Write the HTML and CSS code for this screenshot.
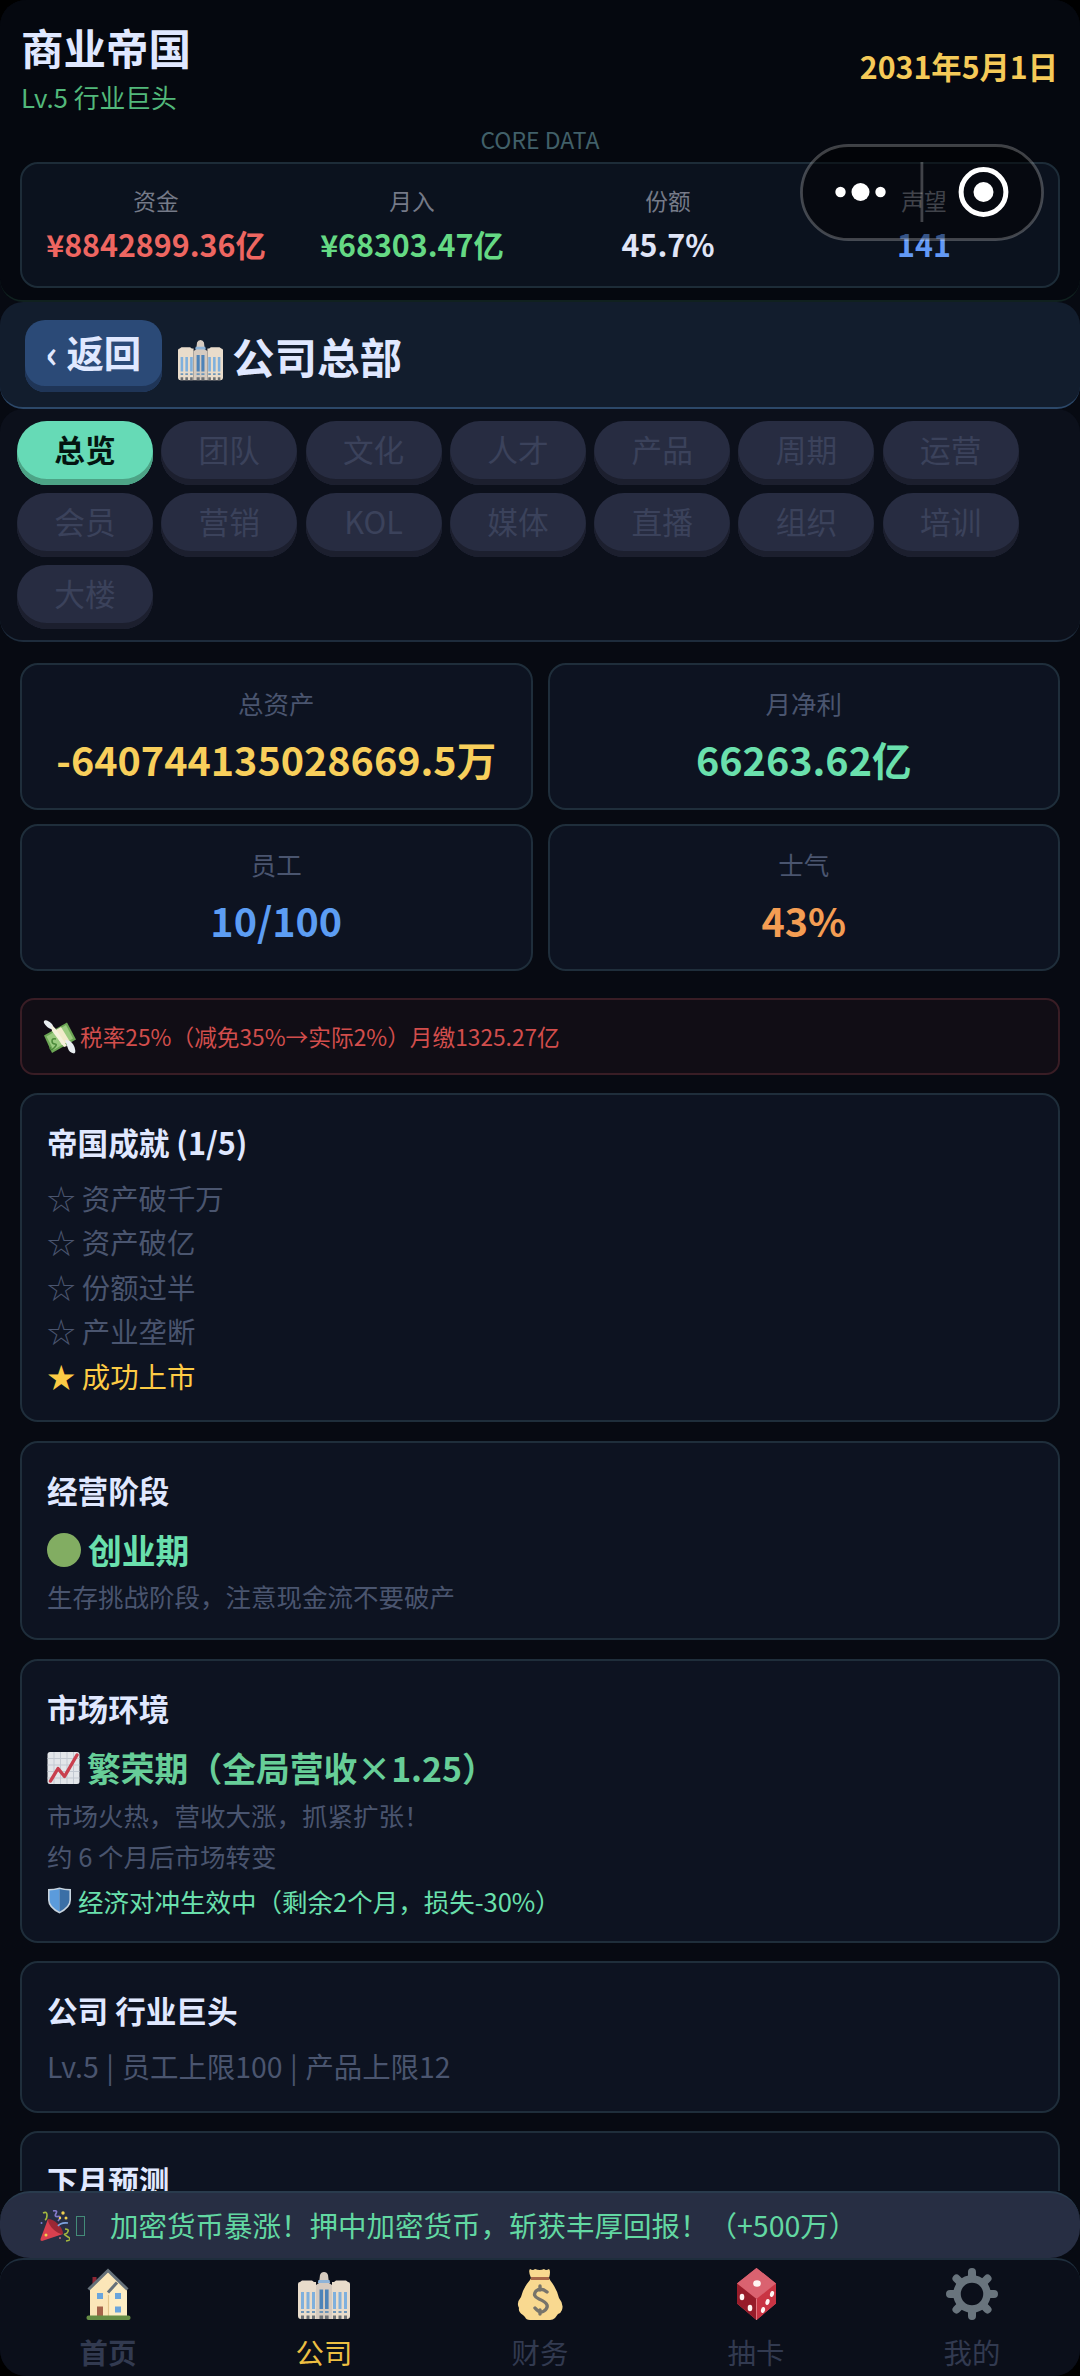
FILE: index.html
```html
<!DOCTYPE html>
<html lang="zh-CN">
<head>
<meta charset="utf-8">
<title>商业帝国</title>
<link rel="stylesheet" href="styles.css">
</head>
<body>
<svg class="defs" width="0" height="0" aria-hidden="true">
  <symbol id="building" viewBox="0 0 52 48">
    <path d="M0 12q0-2 2-2l2-1.500h10l2 1.500h2V47H3q-3 0-3-3zM52 12q0-2-2-2l-2-1.500H38l-2 1.500h-2V47h15q3 0 3-3z" fill="#e9dccb"/>
    <path d="M18 13l3-2 1-8q1-3 4-3t4 3l1 8 3 2v34H18z" fill="#d6cbc0"/>
    <path d="M20.500 8h11l.7 3h-12.400z" fill="#8fb4d8"/>
    <path d="M3 20h3v17H3zM8.500 20h3v17h-3zM14 20h3v17h-3zM35 20h3v17h-3zM40.500 20h3v17h-3zM46 20h3v17h-3z" fill="#7fb0dd"/>
    <path d="M21.500 17.500h3.600V37h-3.600zM27 17.500h3.600V37H27z" fill="#4d83b8"/>
    <path d="M3 39h3v2H3zM8.500 39h3v2h-3zM14 39h3v2h-3zM35 39h3v2h-3zM40.500 39h3v2h-3zM46 39h3v2h-3zM21.500 39h3.600v2h-3.600zM27 39h3.600v2H27z" fill="#6d95b8"/>
    <path d="M3 43.500h3V47H3zM8.500 43.500h3V47h-3zM14 43.500h3V47h-3zM35 43.500h3V47h-3zM40.500 43.500h3V47h-3zM46 43.500h3V47h-3zM21.500 43.500h3.600V47h-3.600zM27 43.500h3.600V47H27z" fill="#6b7075"/>
  </symbol>
</svg>
<div class="app">
  <header class="top">
    <div class="brand-row">
      <div>
        <div class="brand">商业帝国</div>
        <div class="level">Lv.5 行业巨头</div>
      </div>
      <div class="date">2031年5月1日</div>
    </div>
    <div class="core-label">CORE DATA</div>
    <div class="core">
      <div class="core-item"><span>资金</span><b class="red">¥8842899.36亿</b></div>
      <div class="core-item"><span>月入</span><b class="green">¥68303.47亿</b></div>
      <div class="core-item"><span>份额</span><b class="white">45.7%</b></div>
      <div class="core-item"><span>声望</span><b class="blue">141</b></div>
    </div>
    <svg class="capsule" width="244" height="97" viewBox="0 0 244 97">
      <rect x="1.500" y="1.500" width="241" height="94" rx="47" fill="#000" fill-opacity=".45" stroke="#fff" stroke-opacity=".24" stroke-width="2.800"/>
      <circle cx="40.500" cy="48" r="5.200" fill="#fff"/><circle cx="60.500" cy="48" r="9" fill="#fff"/><circle cx="80.500" cy="48" r="5.200" fill="#fff"/>
      <rect x="120.500" y="18" width="2.800" height="60" fill="#fff" fill-opacity=".24"/>
      <circle cx="183.500" cy="48" r="22.400" fill="none" stroke="#fff" stroke-width="5"/><circle cx="183.500" cy="48" r="10" fill="#fff"/>
    </svg>
  </header>

  <div class="titlebar">
    <button class="back">‹ 返回</button>
    <svg class="title-icon" width="45" height="41" viewBox="0 0 52 48" preserveAspectRatio="none"><use href="#building"/></svg>
    <h1>公司总部</h1>
  </div>

  <nav class="tabs">
    <button class="tab active">总览</button><button class="tab">团队</button><button class="tab">文化</button><button class="tab">人才</button><button class="tab">产品</button><button class="tab">周期</button><button class="tab">运营</button>
    <button class="tab">会员</button><button class="tab">营销</button><button class="tab">KOL</button><button class="tab">媒体</button><button class="tab">直播</button><button class="tab">组织</button><button class="tab">培训</button>
    <button class="tab">大楼</button>
  </nav>

  <main class="content">
    <section class="stats">
      <div class="stat"><span>总资产</span><b class="gold">-640744135028669.5万</b></div>
      <div class="stat"><span>月净利</span><b class="mint">66263.62亿</b></div>
      <div class="stat"><span>员工</span><b class="sky">10/100</b></div>
      <div class="stat"><span>士气</span><b class="orange">43%</b></div>
    </section>

    <div class="tax">
      <svg width="34" height="34" viewBox="0 0 34 34">
        <path d="M1 15.500L24 2.500l9 17L9 33z" fill="#6ca655"/>
        <path d="M3.500 16.500L23 5l7 13.500L10.500 30z" fill="#9bcb80"/>
        <path d="M11 11l7-4 8.500 14-7.500 4z" fill="#f1ebcb"/>
        <path d="M1 3Q0-.5 4 .5q3 1 5 3.500 2 3 3 7l-4-2q-4-1-7-6z" fill="#e9eef1"/>
        <path d="M22 20l5 1q4 3 5 8 1 4-1 4.500-5-1-6-5z" fill="#e9eef1"/>
        <path d="M8 5l4 3 12 18-3 1L9 11z" fill="#f5f1dc"/>
        <path d="M13 19q-4-1-4 2t3 3-1 4-4-1" fill="none" stroke="#4c8a3b" stroke-width="1.500"/>
      </svg>
      <span>税率25%（减免35%→实际2%）月缴1325.27亿</span>
    </div>

    <section class="card">
      <h2>帝国成就 (1/5)</h2>
      <ul class="goals">
        <li>☆ 资产破千万</li>
        <li>☆ 资产破亿</li>
        <li>☆ 份额过半</li>
        <li>☆ 产业垄断</li>
        <li class="done">★ 成功上市</li>
      </ul>
    </section>

    <section class="card">
      <h2>经营阶段</h2>
      <div class="phase"><i class="dot"></i><span>创业期</span></div>
      <p>生存挑战阶段，注意现金流不要破产</p>
    </section>

    <section class="card market">
      <h2>市场环境</h2>
      <div class="phase boom">
        <svg width="33" height="34" viewBox="0 0 33 34">
          <rect x=".5" y="1" width="32" height="32" rx="2.500" fill="#e3e6ea"/>
          <path d="M7 1v32M13.500 1v32M20 1v32M26.500 1v32M.5 7.500h32M.5 14h32M.5 20.500h32M.5 27h32" stroke="#c3c9d2" stroke-width="1"/>
          <path d="M3.500 30L11 17.500l6.500 8L30 4" fill="none" stroke="#c9404f" stroke-width="3.400" stroke-linecap="round" stroke-linejoin="round"/>
        </svg>
        <span>繁荣期（全局营收×1.25）</span>
      </div>
      <p>市场火热，营收大涨，抓紧扩张！</p>
      <p class="flush">约 6 个月后市场转变</p>
      <div class="hedge">
        <svg width="25" height="27" viewBox="0 0 25 27">
          <path d="M12.500.5Q18 2 24 2v11q0 8-11.500 13.500Q1 21 1 13V2q6 0 11.500-1.500z" fill="#c6d3de"/>
          <path d="M12.500 2Q8 3.300 2.600 3.500V13q0 6.500 9.900 11.700z" fill="#5b9bdc"/>
          <path d="M12.500 2q4.500 1.300 9.900 1.500V13q0 6.500-9.900 11.700z" fill="#3b6fa6"/>
        </svg>
        <span>经济对冲生效中（剩余2个月，损失-30%）</span>
      </div>
    </section>

    <section class="card">
      <h2>公司 行业巨头</h2>
      <div class="limits">Lv.5 | 员工上限100 | 产品上限12</div>
    </section>

    <section class="card">
      <h2>下月预测</h2>
    </section>
  </main>

  <div class="toast">
    <svg class="party" width="30" height="32" viewBox="0 0 30 32">
      <path d="M8 9L23 24 2 31q-2 0-1.500-2z" fill="#d9404f"/>
      <path d="M8 9q5 0 10 5t5 10q-5 0-10-5T8 9z" fill="#9b2735"/>
      <path d="M3 3q4-2 4 2t-2 5M25 19q4 0 3 2.500t-3 2.500 3 3-2 4" fill="none" stroke="#a4b83f" stroke-width="1.600"/>
      <path d="M13 1q5-1 3 2.500t2 3 0 4.500" fill="none" stroke="#8579c9" stroke-width="1.700"/>
      <path d="M18 16q3-4 10-3" fill="none" stroke="#7fa3e0" stroke-width="1.700"/>
      <circle cx="23" cy="3" r="1.700" fill="#f0cf50"/><circle cx="26" cy="8" r="1.500" fill="#f0cf50"/><circle cx="20" cy="8" r="1.200" fill="#f0cf50"/><circle cx="6" cy="25" r="1.500" fill="#f0cf50"/><circle cx="1.500" cy="13" r="1" fill="#7b7fd0"/><circle cx="20" cy="28" r="1" fill="#c4687a"/>
    </svg>
    <i class="glyph-box"></i>
    <span>加密货币暴涨！押中加密货币，斩获丰厚回报！（+500万）</span>
  </div>

  <nav class="bottom">
    <a class="strong">
      <svg width="52" height="52" viewBox="0 0 52 52">
        <path d="M10.500 9h4v14h-4z" fill="#8e2634"/>
        <path d="M8 21L26 3l19 19v28H8z" fill="#fbe6b8"/>
        <path d="M27 25l9-9 9 9v25H27z" fill="#fdedc4"/>
        <path d="M26.500 27v23" stroke="#e3c68d" stroke-width="1.200"/>
        <path d="M6.500 21.500L26 2.500l19.500 19" fill="none" stroke="#66717a" stroke-width="3"/>
        <path d="M26 24.500l9-10" fill="none" stroke="#66717a" stroke-width="3"/>
        <path d="M15 25h6v6h-6zM33 25h6v6h-6zM33 38.500h6v6h-6z" fill="#6aa5dc"/>
        <path d="M15 38.500h6v9.500h-6z" fill="#a5644b"/>
        <rect x="4.500" y="47.500" width="44" height="4.500" rx="2" fill="#668d45"/>
      </svg>首页</a>
    <a class="current"><svg class="nudge" width="52" height="48"><use href="#building"/></svg>公司</a>
    <a>
      <svg width="52" height="52" viewBox="0 0 52 52">
        <path d="M16 1q3 2 5 0 5 2 9 0 2 2 5 0 2 2 0 9l1 2q7 9 9 18 5 6 3 12-1 3-4 4l-3 4q-2 2-5 2H16q-4 0-5-3L9 47q-5-3-4-7-3-5 2-11Q9 20 16 12l1-2q-3-7-1-9z" fill="#f9d990"/>
        <path d="M17 9h18v3H17z" fill="#a96849"/>
        <path d="M33 24q-6-5-11-1-4 5 3 8t8 6-3 6-9-3M26 18v4M26 42v4" fill="none" stroke="#77746b" stroke-width="3.400" stroke-linecap="round"/>
      </svg>财务</a>
    <a>
      <svg width="52" height="52" viewBox="0 0 52 52">
        <path d="M26.500 0L46 15.500v20L26.500 52 7 35.500v-20z" fill="#db5262"/>
        <path d="M26.500 0L46 15.500 26.500 31 7 15.500z" fill="#da6270"/>
        <path d="M7 15.500L26.500 31v21L7 35.500z" fill="#971c2a"/>
        <path d="M46 15.500L26.500 31v21L46 35.500z" fill="#c93443"/>
        <path d="M26.500 31v21" stroke="#e07580" stroke-width="1"/>
        <g fill="#fff5f3"><ellipse cx="27" cy="15.500" rx="3.800" ry="3.300"/><ellipse cx="12" cy="29" rx="2.300" ry="3.200"/><ellipse cx="20" cy="40" rx="2.300" ry="3.200"/><ellipse cx="42" cy="26" rx="2" ry="3" transform="rotate(15 42 26)"/><ellipse cx="37.500" cy="34" rx="2" ry="3" transform="rotate(15 37.500 34)"/><ellipse cx="33" cy="42" rx="2" ry="3" transform="rotate(15 33 42)"/></g>
      </svg>抽卡</a>
    <a>
      <svg width="52" height="52" viewBox="0 0 52 52" fill="none" stroke="#69747d">
        <circle cx="26" cy="26" r="15" stroke-width="7.500"/>
        <path d="M26 4v5M26 43v5M4 26h5M43 26h5M10.500 10.500l3.500 3.500M38 38l3.500 3.500M10.500 41.500L14 38M38 14l3.500-3.500" stroke-width="8" stroke-linecap="round"/>
      </svg>我的</a>
  </nav>
</div>
</body>
</html>
```

FILE: styles.css
```css
* { box-sizing: border-box; }
html, body { margin: 0; background: #000; }
body { font-family: "Noto Sans CJK SC", sans-serif; color: #e0e8ff; }
h1, h2, p, ul { margin: 0; padding: 0; }
button { border: 0; padding: 0; font: inherit; color: inherit; }
b { font-weight: 700; }
svg { display: block; flex: none; }
.defs { position: absolute; }

.app {
  width: 1080px;
  height: 2376px;
  display: flex;
  flex-direction: column;
  overflow: hidden;
  border-radius: 26px;
  background: #070a12;
}

/* header */
.top {
  position: relative;
  height: 302px;
  padding: 20px 20px 0;
  border-bottom: 2px solid #10211f;
  border-radius: 23px;
  background: #05080f;
}
.brand-row { display: flex; justify-content: space-between; height: 106px; padding: 0 2px 0 1px; }
.brand { font-size: 42.500px; font-weight: 700; line-height: 54px; }
.level { margin-top: 4px; font-size: 25.800px; line-height: 38px; color: #52b87b; }
.date { margin-top: 26px; font-size: 30.300px; font-weight: 700; line-height: 40px; color: #f5ca58; }
.core-label { height: 36px; font-size: 23px; line-height: 26px; text-align: center; color: #416069; }
.core {
  display: flex;
  height: 126px;
  padding: 20px 6px 0;
  border: 2px solid #1d2c38;
  border-radius: 18px;
  background: #0b121e;
}
.core-item { flex: 1; text-align: center; font-size: 22.700px; line-height: 34px; color: #757a88; }
.core-item span { display: block; height: 38px; }
.core-item b { display: block; font-size: 30.400px; line-height: 44px; }
.red { color: #ee6661; }
.green { color: #65d984; }
.white { color: #e0e5f7; }
.blue { color: #6399f5; }
.capsule { position: absolute; left: 800px; top: 144px; }

/* page title */
.titlebar {
  display: flex;
  height: 107px;
  padding: 18px 0 0 25px;
  border-bottom: 2px solid #2c4869;
  border-radius: 23px;
  background: #121d2d;
}
.back {
  width: 137px;
  height: 72px;
  padding-bottom: 8px;
  border-radius: 20px;
  background: #2b4a77;
  box-shadow: inset 0 -6px #1f3557;
  font-size: 37.400px;
  font-weight: 700;
  line-height: 60px;
}
.title-icon { margin: 20px 9px 0 16px; }
h1 { font-size: 42.500px; font-weight: 700; line-height: 71px; }

/* tabs */
.tabs {
  display: grid;
  grid-template-columns: repeat(7, 136px);
  grid-auto-rows: 64px;
  gap: 8px 8.300px;
  height: 233px;
  padding: 12px 17px 0;
  border-bottom: 2px solid #1e2c3c;
  border-radius: 23px;
  background: #0c101b;
}
.tab {
  padding-bottom: 8px;
  border-radius: 30px;
  background: #272c41;
  box-shadow: inset 0 -6px #1c1f2e;
  font-size: 30.700px;
  line-height: 54px;
  color: #3b425b;
}
.tab.active { background: #66dab6; box-shadow: inset 0 -6px #4da386; color: #041511; font-weight: 700; }

/* content */
.content { flex: 1; min-height: 0; overflow: hidden; padding: 21px 20px 0; }
.stats { display: grid; grid-template-columns: 1fr 1fr; grid-auto-rows: 147px; gap: 14px 15px; margin-bottom: 27px; }
.stat {
  padding-top: 18px;
  border: 2px solid #1f2e3b;
  border-radius: 18px;
  background: #0d1321;
  text-align: center;
  font-size: 25.500px;
  line-height: 40px;
  color: #4a556f;
}
.stat span { display: block; height: 44px; }
.stat b { display: block; font-size: 39.500px; line-height: 64px; }
.gold { color: #f8cf5b; }
.mint { color: #6ae0ad; }
.sky { color: #5c9df3; }
.orange { color: #f49d53; }

.tax {
  display: flex;
  align-items: center;
  height: 77px;
  margin-bottom: 18px;
  padding-left: 21px;
  border: 2px solid #391d25;
  border-radius: 14px;
  background: #110d15;
  font-size: 22.700px;
  color: #d24d4c;
}
.tax span { margin-left: 3px; line-height: 36px; }

.card {
  margin-bottom: 18.700px;
  padding: 22px 25px;
  border: 2px solid #1f2e3b;
  border-radius: 18px;
  background: #0d1321;
}
h2 { margin-bottom: 7.750px; font-size: 30.600px; font-weight: 700; line-height: 51px; }
.goals { list-style: none; }
.goals, .limits { font-size: 28.400px; line-height: 44.500px; color: #4a556f; }
.limits { word-spacing: 1.300px; }
.goals .done { color: #fccb45; }
.phase { display: flex; align-items: center; gap: 7px; height: 50px; margin-top: 8.750px; font-size: 33.800px; font-weight: 700; line-height: 50px; color: #6ae0ad; }
.phase.boom { color: #67ce98; }
.dot { width: 34px; height: 34px; border-radius: 50%; background: #82ad62; }
.card p { margin-top: 1px; font-size: 25.500px; line-height: 40.500px; color: #4a556f; }
.market p { margin-top: 2.500px; }
.market p.flush { margin-top: 0.500px; }
.market { padding-bottom: 18px; }
.hedge { display: flex; align-items: center; gap: 6px; height: 45px; margin-top: 1px; font-size: 25.500px; line-height: 45px; color: #6ae0ad; }
.card h2:has(+ .phase) { margin-bottom: 0; }

/* event strip */
.toast {
  display: flex;
  align-items: center;
  height: 67px;
  padding-left: 40px;
  border-top: 2px solid #293b4d;
  border-radius: 30px;
  background: #272e43;
  font-size: 28.500px;
  line-height: 60px;
  color: #62d8a2;
}
.glyph-box { width: 9px; height: 20px; margin: 0 25px 0 6px; border: 1.500px solid #438b78; }
.toast span { white-space: nowrap; margin-top: -1px; }

/* bottom bar */
.bottom {
  display: flex;
  height: 118px;
  border-top: 2px solid #1f2e3d;
  border-radius: 23px;
  background: #0b0f1a;
}
.bottom a { flex: 1; display: flex; flex-direction: column; align-items: center; padding-top: 8px; font-size: 28.400px; line-height: 40px; color: #323a50; }
.bottom svg { margin-bottom: 12px; }
.bottom .nudge { margin: 4px 0 12px; }
.bottom .strong { font-weight: 700; }
.bottom .current { color: #edbf42; }
```
